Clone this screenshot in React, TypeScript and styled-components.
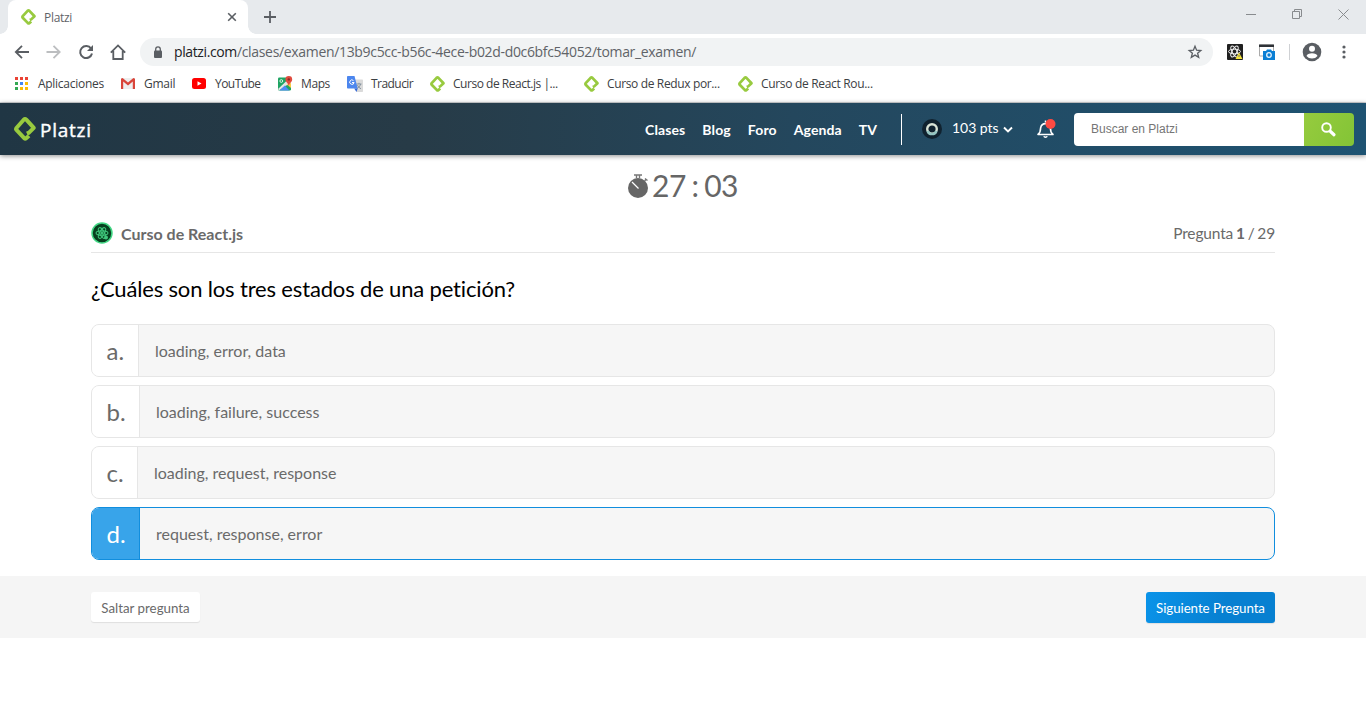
import React from "react";
import styled, { createGlobalStyle } from "styled-components";

const Global = createGlobalStyle`
  * { box-sizing: border-box; }
  body { margin: 0; background: #fff; font-family: Lato, "Open Sans", sans-serif; overflow: hidden; }
  svg { display: block; flex: none; overflow: visible; }
  button { font-family: inherit; border: 0; cursor: pointer; }
`;

const ui = `"Open Sans", "Noto Sans", sans-serif`;

const Page = styled.div`
  width: 1366px;
  height: 728px;
  display: flex;
  flex-direction: column;
  background: #fff;
`;

/* ---------- browser frame ---------- */
const TabStrip = styled.div`
  height: 34px;
  flex: none;
  background: #e7eaed;
  display: flex;
  padding-left: 8px;
`;
const Tab = styled.div`
  position: relative;
  width: 240px;
  background: #fff;
  border-radius: 8px 8px 0 0;
  display: flex;
  align-items: center;
  padding: 0 11px 0 13px;
  &::before, &::after {
    content: "";
    position: absolute;
    bottom: 0;
    width: 8px;
    height: 8px;
  }
  &::before { left: -8px; background: radial-gradient(circle at 0 0, transparent 7.5px, #fff 8px); }
  &::after { right: -8px; background: radial-gradient(circle at 100% 0, transparent 7.5px, #fff 8px); }
`;
const TabTitle = styled.span`
  font: 12px ${ui};
  letter-spacing: -0.3px;
  color: #5f6368;
  margin-left: 8px;
  flex: 1;
`;
const NewTab = styled.div`
  display: flex;
  align-items: center;
  padding-left: 16px;
  flex: 1;
`;
const WindowButtons = styled.div`
  display: flex;
  align-items: center;
  gap: 35px;
  padding: 0 17px 6px 0;
`;
const Toolbar = styled.div`
  height: 36px;
  flex: none;
  display: flex;
  align-items: center;
  padding-left: 14px;
`;
const NavIcons = styled.div`
  display: flex;
  gap: 16px;
  width: 126px;
`;
const AddressBar = styled.div`
  width: 1073px;
  height: 28px;
  border-radius: 14px;
  background: #f1f3f4;
  display: flex;
  align-items: center;
  padding: 0 10px 0 13px;
`;
const Url = styled.span`
  font: 14px/20px ${ui};
  letter-spacing: -0.33px;
  color: #5f6368;
  margin-left: 11px;
  flex: 1;
  b { font-weight: 400; color: #202124; letter-spacing: -0.38px; }
`;
const Extensions = styled.div`
  display: flex;
  align-items: center;
  margin-left: 14px;
`;
const Separator = styled.i`
  width: 1px;
  height: 16px;
  background: #cfd1d4;
  margin: 0 12px 0 13px;
`;
const Bookmarks = styled.div`
  height: 33px;
  flex: none;
  display: flex;
  padding: 0 0 5px 15px;
  border-bottom: 1px solid #d5d7da;
`;
const Bookmark = styled.div<{ $w: number; $gap: number; $ls: number }>`
  width: ${(p) => p.$w}px;
  flex: none;
  display: flex;
  align-items: center;
  gap: ${(p) => p.$gap}px;
  font: 12px ${ui};
  letter-spacing: ${(p) => p.$ls}px;
  color: #3c4043;
  white-space: nowrap;
`;

/* ---------- site header ---------- */
const Header = styled.header`
  height: 52px;
  flex: none;
  display: flex;
  align-items: center;
  padding: 0 12px 0 14px;
  background: linear-gradient(90deg, #203644 0%, #273b47 30%, #24475d 58%, #1e5372 100%);
  box-shadow: 0 1px 5px rgba(0, 0, 0, 0.45);
  color: #fff;
`;
const Brand = styled.div`
  display: flex;
  align-items: center;
  gap: 4px;
  width: 631px;
`;
const BrandName = styled.span`
  font: 400 19px/24px ${ui};
  letter-spacing: 0.75px;
  padding-top: 1px;
  -webkit-text-stroke: 0.4px #fff;
`;
const Nav = styled.nav`
  display: flex;
  gap: 17px;
  width: 256px;
  font-weight: 700;
  font-size: 14px;
  letter-spacing: 0.12px;
  white-space: nowrap;
`;
const UserArea = styled.div`
  display: flex;
  align-items: center;
  border-left: 1px solid #fff;
  height: 31px;
  width: 173px;
  padding-left: 20px;
`;
const Points = styled.span`
  font-size: 14px;
  margin: -3px 5px 0 10px;
  letter-spacing: -0.05px;
  white-space: nowrap;
`;
const BellBox = styled.div`
  margin-left: 24px;
`;
const Search = styled.div`
  display: flex;
  height: 33px;
  flex: 1;
  border-radius: 4px;
  overflow: hidden;
`;
const SearchField = styled.div`
  width: 230px;
  background: #fff;
  color: #757575;
  font: 12px/32px "Liberation Sans", Arial, sans-serif;
  padding-left: 17px;
`;
const SearchButton = styled.div`
  flex: 1;
  display: flex;
  align-items: center;
  justify-content: center;
  padding-right: 1px;
  background: linear-gradient(120deg, #96cb3e, #83c436);
`;

/* ---------- exam ---------- */
const Timer = styled.div`
  height: 61px;
  flex: none;
  display: flex;
  align-items: center;
  padding-left: 627px;
  gap: 3px;
  color: #666;
`;
const TimeLeft = styled.span`
  margin-top: -2px;
  font-size: 30px;
  letter-spacing: -0.5px;
  word-spacing: -1.5px;
  white-space: nowrap;
`;
const Content = styled.main`
  width: 1184px;
  margin: 0 auto;
  flex: none;
`;
const CourseRow = styled.div`
  height: 37px;
  display: flex;
  align-items: center;
  padding-bottom: 2px;
  border-bottom: 1px solid #e6e6e6;
  color: #6a6a6a;
`;
const CourseName = styled.span`
  font-size: 16px;
  font-weight: 700;
  margin-left: 8px;
  padding-top: 1px;
  flex: 1;
`;
const Counter = styled.span`
  font-size: 15.5px;
  letter-spacing: -0.15px;
  word-spacing: -1px;
`;
const Question = styled.h1`
  margin: 0;
  height: 71px;
  font-size: 22px;
  line-height: 71px;
  letter-spacing: -0.16px;
  font-weight: 400;
  color: #000;
`;
const Options = styled.div`
  display: flex;
  flex-direction: column;
  gap: 8px;
`;
const Option = styled.div<{ $on?: boolean }>`
  height: 53px;
  display: flex;
  border: 1px solid ${(p) => (p.$on ? "#118ede" : "#e6e6e6")};
  border-radius: 8px;
  overflow: hidden;
  background: #f6f6f6;
`;
const Letter = styled.div<{ $w: number; $on?: boolean }>`
  width: ${(p) => p.$w}px;
  padding-left: 14.5px;
  font-size: 24px;
  line-height: 52px;
  border-right: 1px solid ${(p) => (p.$on ? "#118ede" : "#e6e6e6")};
  background: ${(p) => (p.$on ? "#38a4ea" : "#fff")};
  color: ${(p) => (p.$on ? "#fff" : "#6a6a6a")};
`;
const Answer = styled.div`
  padding-left: 16px;
  font-size: 16px;
  line-height: 52px;
  color: #6a6a6a;
`;
const Footer = styled.footer`
  margin-top: 16px;
  height: 62px;
  flex: none;
  background: #f5f5f5;
  padding: 16px 91px 0;
  display: flex;
  align-items: flex-start;
  justify-content: space-between;
`;
const Button = styled.button<{ $primary?: boolean }>`
  width: ${(p) => (p.$primary ? 129 : 109)}px;
  height: ${(p) => (p.$primary ? 31 : 30)}px;
  padding: 1px 0 0;
  border-radius: 3px;
  font-size: 13.33px;
  white-space: nowrap;
  letter-spacing: ${(p) => (p.$primary ? "-0.07px" : "0")};
  color: ${(p) => (p.$primary ? "#fff" : "#6a6a6a")};
  background: ${(p) => (p.$primary ? "linear-gradient(105deg, #0a93e9, #0780d1 60%)" : "#fff")};
  box-shadow: 0 1px 1px rgba(0, 0, 0, 0.09);
`;

/* ---------- drawings ---------- */
const PlatziMark = ({ w = 16, h = 16 }: { w?: number; h?: number }) => (
  <svg width={w} height={h} viewBox="0 0 22 24" preserveAspectRatio="none" fill="none" stroke="#98ca3f" strokeWidth="4" strokeLinejoin="round">
    <path d="M12.900 16.600 15 15.600 19.800 10.900 12.300 2.700Q11 1.500 9.700 2.700L2.200 11.200Q1.700 12 2.200 12.700L10.200 21.200Q11.200 22 12.200 21.200L15 18.800" />
  </svg>
);
const Apps = () => {
  const c = ["#ea4335", "#ea4335", "#ea4335", "#34a853", "#4285f4", "#fbbc05", "#34a853", "#fbbc05", "#fbbc05"];
  return (
    <svg width="13" height="13" viewBox="0 0 13 13">
      {c.map((f, i) => <rect key={i} x={(i % 3) * 5} y={Math.floor(i / 3) * 5} width="3" height="3" fill={f} />)}
    </svg>
  );
};
const Gmail = () => (
  <svg width="14" height="11" viewBox="0 0 14 11">
    <rect width="14" height="11" rx="1" fill="#eee" />
    <path d="M0 1v10h2.2V3.6L7 7.5l4.8-3.9V11H14V1q-1-1.5-2.2-.6L7 4.6 2.2.4Q1-.5 0 1z" fill="#d9453a" />
  </svg>
);
const YouTube = () => (
  <svg width="14" height="11" viewBox="0 0 14 11">
    <rect width="14" height="11" rx="2.5" fill="#f00" />
    <path d="M5.5 3.2v4.6l4-2.3z" fill="#fff" />
  </svg>
);
const Maps = () => (
  <svg width="14" height="15" viewBox="0 0 14 15">
    <rect y="1.5" width="13" height="13" rx="1.2" fill="#1fa463" />
    <path d="M0 13 10.5 3 13 5.5V8L8 9.5 1 14.5z" fill="#e4e4e4" />
    <path d="M1.500 14.5 6.800 9.500 11.500 14.5z" fill="#4c8bf5" />
    <path d="M9 8.5 13 12v-5z" fill="#fbcb43" />
    <path d="M10.8 0a3.4 3.4 0 0 0-3.4 3.4c0 2.5 2.8 3.4 3.4 6.6.6-3.2 3.4-4.1 3.4-6.6A3.4 3.4 0 0 0 10.8 0z" fill="#e04a3e" />
    <circle cx="10.8" cy="3.4" r="1.2" fill="#8c2b24" />
    <circle cx="3.3" cy="5" r="1.4" fill="none" stroke="#d7f2e3" />
  </svg>
);
const Translate = () => (
  <svg width="16" height="16" viewBox="0 0 16 16">
    <path d="M6 3.5h9.3q.7 0 .7.7v11q0 .8-.7.8H9.5z" fill="#dadada" />
    <path d="M9.5 8h5M12 6.8V8M13.7 8q-.7 3-3.5 4.3M10.4 9q1 2.6 3.6 3.8" fill="none" stroke="#8794a0" />
    <path d="M.8 0h6.7l3.2 12.5H.8q-.8 0-.8-.8V.8Q0 0 .8 0z" fill="#4c86ee" />
    <path d="M7.2 12.5h3.5L9.5 16z" fill="#3367d6" />
    <path d="M6.5 4.6a2.2 2.2 0 1 0 .6 1.9H5" fill="none" stroke="#fff" />
  </svg>
);
const stroke = { fill: "none", stroke: "#5a5e63", strokeWidth: 2 };
const Atom = ({ color, size }: { color: string; size: number }) => (
  <svg width={size} height={size} viewBox="-10 -10 20 20" fill="none" stroke={color} strokeWidth="1.5">
    <ellipse rx="8.5" ry="3.3" />
    <ellipse rx="8.5" ry="3.3" transform="rotate(60)" />
    <ellipse rx="8.5" ry="3.3" transform="rotate(120)" />
    <circle r="1.6" fill={color} />
  </svg>
);

const nav = ["Clases", "Blog", "Foro", "Agenda", "TV"];
const bookmarks = [
  { label: "Aplicaciones", w: 106, gap: 10, ls: -0.28, icon: <Apps /> },
  { label: "Gmail", w: 71, gap: 9, ls: -0.25, icon: <Gmail /> },
  { label: "YouTube", w: 86, gap: 9, ls: -0.55, icon: <YouTube /> },
  { label: "Maps", w: 69, gap: 9, ls: -0.4, icon: <Maps /> },
  { label: "Traducir", w: 83, gap: 8, ls: -0.55, icon: <Translate /> },
  { label: "Curso de React.js |...", w: 154, gap: 8, ls: -0.47, icon: <PlatziMark w={15} /> },
  { label: "Curso de Redux por...", w: 154, gap: 8, ls: -0.36, icon: <PlatziMark w={15} /> },
  { label: "Curso de React Rou...", w: 154, gap: 8, ls: -0.32, icon: <PlatziMark w={15} /> },
];
const options = [
  { l: "a.", t: "loading, error, data", w: 47 },
  { l: "b.", t: "loading, failure, success", w: 48 },
  { l: "c.", t: "loading, request, response", w: 46 },
  { l: "d.", t: "request, response, error", w: 48, on: true },
];

export default function App() {
  return (
    <Page>
      <Global />
      <TabStrip>
        <Tab>
          <PlatziMark w={15} />
          <TabTitle>Platzi</TabTitle>
          <svg width="10" height="10" viewBox="0 0 10 10"><path d="M1.2 1.2l7.6 7.6M8.8 1.2 1.2 8.8" {...stroke} strokeWidth="1.6" /></svg>
        </Tab>
        <NewTab>
          <svg width="12" height="12" viewBox="0 0 12 12"><path d="M6 0v12M0 6h12" {...stroke} strokeWidth="1.8" /></svg>
        </NewTab>
        <WindowButtons>
          <svg width="11" height="11" viewBox="0 0 11 11"><path d="M0 5.5h10" stroke="#888b8e" /></svg>
          <svg width="11" height="11" viewBox="0 0 11 11" fill="none" stroke="#888b8e"><path d="M.5 2.5h7v7h-7zM2.500 2.500V.5h7v7h-2" /></svg>
          <svg width="11" height="11" viewBox="0 0 11 11"><path d="M.5.5l10 10M10.500.5l-10 10" stroke="#888b8e" /></svg>
        </WindowButtons>
      </TabStrip>
      <Toolbar>
        <NavIcons>
          <svg width="16" height="16" viewBox="0 0 16 16"><path d="M15 8H2.500M8 1.800 1.800 8 8 14.200" {...stroke} strokeWidth="1.8" /></svg>
          <svg width="16" height="16" viewBox="0 0 16 16"><path d="M.5 8h12.500M7.500 1.800 13.700 8l-6.200 6.200" {...stroke} stroke="#bcbec0" strokeWidth="1.8" /></svg>
          <svg width="16" height="16" viewBox="0 0 16 16">
            <path d="M13.100 4.600A6 6 0 1 0 14 9.500" {...stroke} />
            <path d="M15 1v6H9z" fill="#5a5e63" />
          </svg>
          <svg width="16" height="16" viewBox="0 0 16 16"><path d="M.8 8.600 8 1.400l7.200 7.200M3.300 7v8h9.400V7" {...stroke} strokeWidth="1.8" /></svg>
        </NavIcons>
        <AddressBar>
          <svg width="10" height="13" viewBox="0 0 10 13">
            <rect x="1" y="4.500" width="8" height="7.500" rx="1" fill="#5a5e63" />
            <path d="M2.700 5V3.200a2.300 2.300 0 0 1 4.600 0V5" fill="none" stroke="#5a5e63" strokeWidth="1.300" />
          </svg>
          <Url><b>platzi.com</b>/clases/examen/13b9c5cc-b56c-4ece-b02d-d0c6bfc54052/tomar_examen/</Url>
          <svg width="16" height="16" viewBox="0 0 16 16"><path d="M8 2.300l1.600 3.900 4.200.3-3.200 2.700 1.100 4.100L8 11.100l-3.700 2.200 1.100-4.100-3.200-2.700 4.200-.3z" fill="none" stroke="#5a5e63" strokeWidth="1.300" /></svg>
        </AddressBar>
        <Extensions>
          <svg width="16" height="16" viewBox="0 0 16 16">
            <rect width="16" height="16" rx="1" fill="#202020" />
            <g fill="none" stroke="#eee" strokeWidth="1" transform="translate(7.500 7.500)">
              <ellipse rx="6" ry="2.300" /><ellipse rx="6" ry="2.300" transform="rotate(60)" /><ellipse rx="6" ry="2.300" transform="rotate(120)" />
            </g>
            <path d="M12 8.500 15.500 15h-7z" fill="#f3e33b" />
            <path d="M12 11v2" stroke="#777" />
          </svg>
          <svg width="17" height="16" viewBox="0 0 17 16" style={{ marginLeft: 16 }}>
            <path d="M.5 1h14v11H.5z" fill="#fff" stroke="#aaa" />
            <path d="M0 .5h15V3H0z" fill="#2f3237" />
            <path d="M4 7h3l1-1.500h4L13 7h3v9H4z" fill="#0b7fd4" />
            <circle cx="10" cy="11" r="2.300" fill="none" stroke="#e6f4ff" strokeWidth="1.300" />
          </svg>
          <Separator />
          <svg width="20" height="20" viewBox="0 0 20 20">
            <circle cx="10" cy="10" r="9.300" fill="#5a5e63" />
            <circle cx="10" cy="6.800" r="3" fill="#fff" />
            <path d="M4.500 14q1-2.700 5.500-2.700t5.500 2.700Q13.500 16.500 10 16.500T4.500 14z" fill="#fff" />
          </svg>
          <svg width="4" height="14" viewBox="0 0 4 14" style={{ marginLeft: 20 }} fill="#5a5e63">
            <circle cx="2" cy="2" r="1.600" /><circle cx="2" cy="7" r="1.600" /><circle cx="2" cy="12" r="1.600" />
          </svg>
        </Extensions>
      </Toolbar>
      <Bookmarks>
        {bookmarks.map((b) => (
          <Bookmark key={b.label} $w={b.w} $gap={b.gap} $ls={b.ls}>{b.icon}{b.label}</Bookmark>
        ))}
      </Bookmarks>
      <Header>
        <Brand>
          <PlatziMark w={22} h={24} />
          <BrandName>Platzi</BrandName>
        </Brand>
        <Nav>{nav.map((n) => <span key={n}>{n}</span>)}</Nav>
        <UserArea>
          <svg width="20" height="20" viewBox="0 0 20 20">
            <circle cx="10" cy="10" r="10" fill="#10222f" />
            <circle cx="10" cy="10" r="4.800" fill="none" stroke="#d9e3d6" strokeWidth="2.400" />
            <path d="M5.500 12a4.800 4.800 0 0 0 9 0" fill="none" stroke="#93c4c1" strokeWidth="2.400" />
          </svg>
          <Points>103 pts</Points>
          <svg width="10" height="7" viewBox="0 0 10 7"><path d="M1 1.500l4 4 4-4" fill="none" stroke="#fff" strokeWidth="1.900" /></svg>
          <BellBox>
            <svg width="18" height="20" viewBox="0 0 18 20">
              <path d="M1 15.500q2.600-2 2.600-6.500a5 5.500 0 0 1 9.800 0q0 4.500 2.600 6.500z" fill="none" stroke="#fff" strokeWidth="1.600" strokeLinejoin="round" />
              <path d="M8.500 3.500V1.500M6.800 17.300a1.800 1.400 0 0 0 3.400 0" fill="none" stroke="#fff" strokeWidth="1.500" />
              <circle cx="13.500" cy="5" r="5" fill="#ff4a42" />
            </svg>
          </BellBox>
        </UserArea>
        <Search>
          <SearchField>Buscar en Platzi</SearchField>
          <SearchButton>
            <svg width="15" height="15" viewBox="0 0 15 15" fill="none" stroke="#fff">
              <circle cx="5.500" cy="5.500" r="4.300" strokeWidth="1.900" />
              <path d="M9.500 9.500l3.500 3.200" strokeWidth="3.200" strokeLinecap="round" />
            </svg>
          </SearchButton>
        </Search>
      </Header>
      <Timer>
        <svg width="22" height="24" viewBox="0 0 22 24">
          <circle cx="11" cy="14" r="10" fill="#666" />
          <path d="M7 1h8M9.500 1v3.500M12.500 1v3.500M18 4.500l2.500 2M17.500 7l1.500-1.500" stroke="#777" strokeWidth="1.400" />
          <path d="M5 8l6.500 6.500" stroke="#fff" strokeWidth="1.300" />
        </svg>
        <TimeLeft>27 : 03</TimeLeft>
      </Timer>
      <Content>
        <CourseRow>
          <svg width="22" height="22" viewBox="0 0 22 22">
            <circle cx="11" cy="11" r="10" fill="#07401f" stroke="#42d885" strokeWidth="1.500" />
            <g transform="translate(4 4)"><Atom color="#3fc67b" size={14} /></g>
            <circle cx="15" cy="15.500" r="2" fill="#3fc67b" />
          </svg>
          <CourseName>Curso de React.js</CourseName>
          <Counter>Pregunta <b>1</b> / 29</Counter>
        </CourseRow>
        <Question>¿Cuáles son los tres estados de una petición?</Question>
        <Options>
          {options.map((o) => (
            <Option key={o.l} $on={o.on}>
              <Letter $w={o.w} $on={o.on}>{o.l}</Letter>
              <Answer>{o.t}</Answer>
            </Option>
          ))}
        </Options>
      </Content>
      <Footer>
        <Button>Saltar pregunta</Button>
        <Button $primary>Siguiente Pregunta</Button>
      </Footer>
    </Page>
  );
}
